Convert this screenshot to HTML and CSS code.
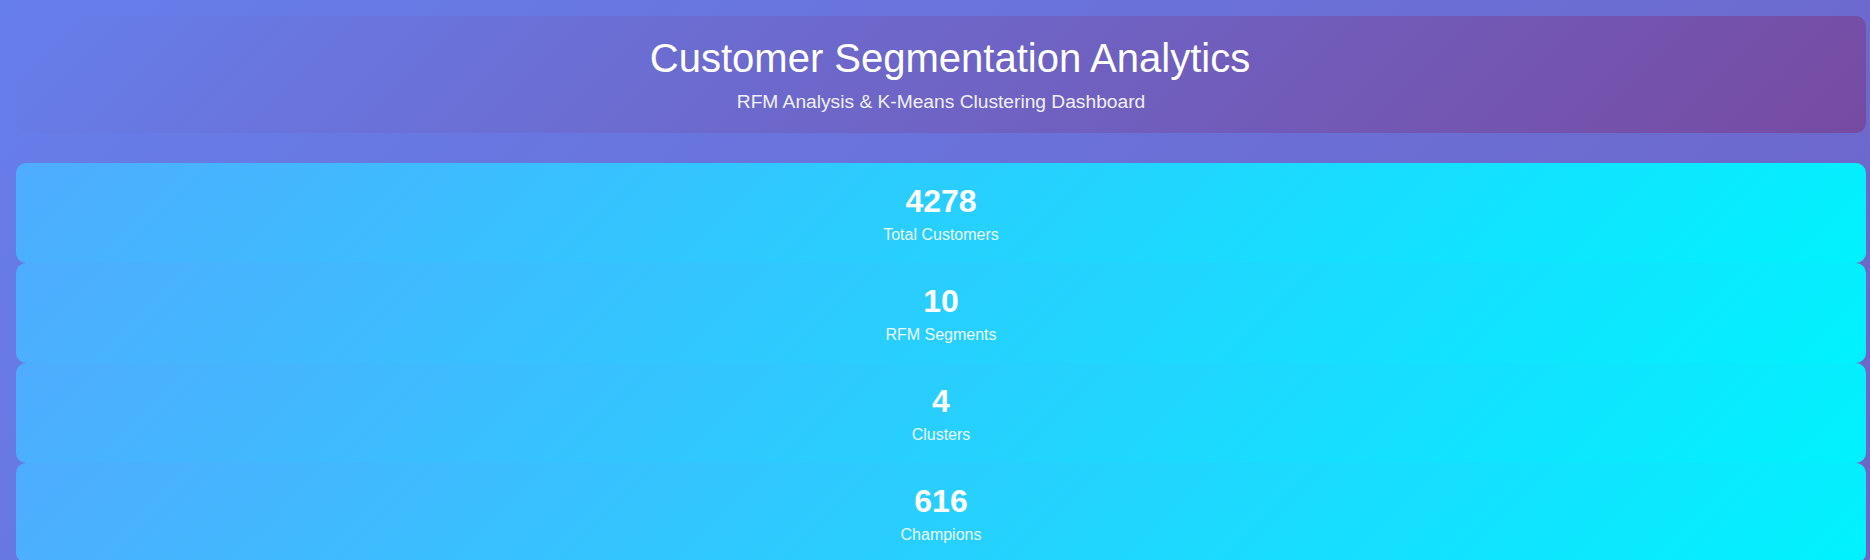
FILE: index.html
```html
<!DOCTYPE html>
<html lang="en">
<head>
<meta charset="utf-8">
<title>Customer Segmentation Analytics</title>
<link rel="stylesheet" href="styles.css">
</head>
<body>
<div class="container">
  <header class="header">
    <h1 class="title">Customer Segmentation Analytics</h1>
    <p class="subtitle">RFM Analysis &amp; K-Means Clustering Dashboard</p>
  </header>
  <section class="stats">
    <div class="stat-card">
      <div class="stat-value">4278</div>
      <div class="stat-label">Total Customers</div>
    </div>
    <div class="stat-card">
      <div class="stat-value">10</div>
      <div class="stat-label">RFM Segments</div>
    </div>
    <div class="stat-card">
      <div class="stat-value">4</div>
      <div class="stat-label">Clusters</div>
    </div>
    <div class="stat-card">
      <div class="stat-value">616</div>
      <div class="stat-label">Champions</div>
    </div>
  </section>
</div>
</body>
</html>
```

FILE: styles.css
```css
html, body {
  margin: 0;
  padding: 0;
}

body {
  min-height: 100vh;
  font-family: "Liberation Sans", Arial, sans-serif;
  color: #ffffff;
  background: linear-gradient(135deg, #667eea 0%, #6e64c6 100%);
  overflow: hidden;
}

.container {
  width: 1850px;
  margin: 0 0 0 16px;
  padding-top: 16px;
}

.header {
  background: linear-gradient(135deg, #667eea 0%, #764ba2 100%);
  border-radius: 10px;
  padding: 20px 20px 20px;
  text-align: center;
}

.title {
  margin: 0 0 10px;
  padding-left: 18px;
  font-size: 40px;
  font-weight: normal;
  line-height: normal;
}

.subtitle {
  margin: 0;
  font-size: 19.2px;
  opacity: 0.9;
}

.stats {
  display: flex;
  flex-direction: column;
  margin-top: 30px;
}

.stat-card {
  background: linear-gradient(135deg, #4facfe 0%, #00f2fe 100%);
  border-radius: 10px;
  padding: 20px 20px 19px;
  text-align: center;
}

.stat-value {
  font-size: 32px;
  font-weight: bold;
  margin-bottom: 6px;
}

.stat-label {
  font-size: 16px;
  opacity: 0.9;
}
```
